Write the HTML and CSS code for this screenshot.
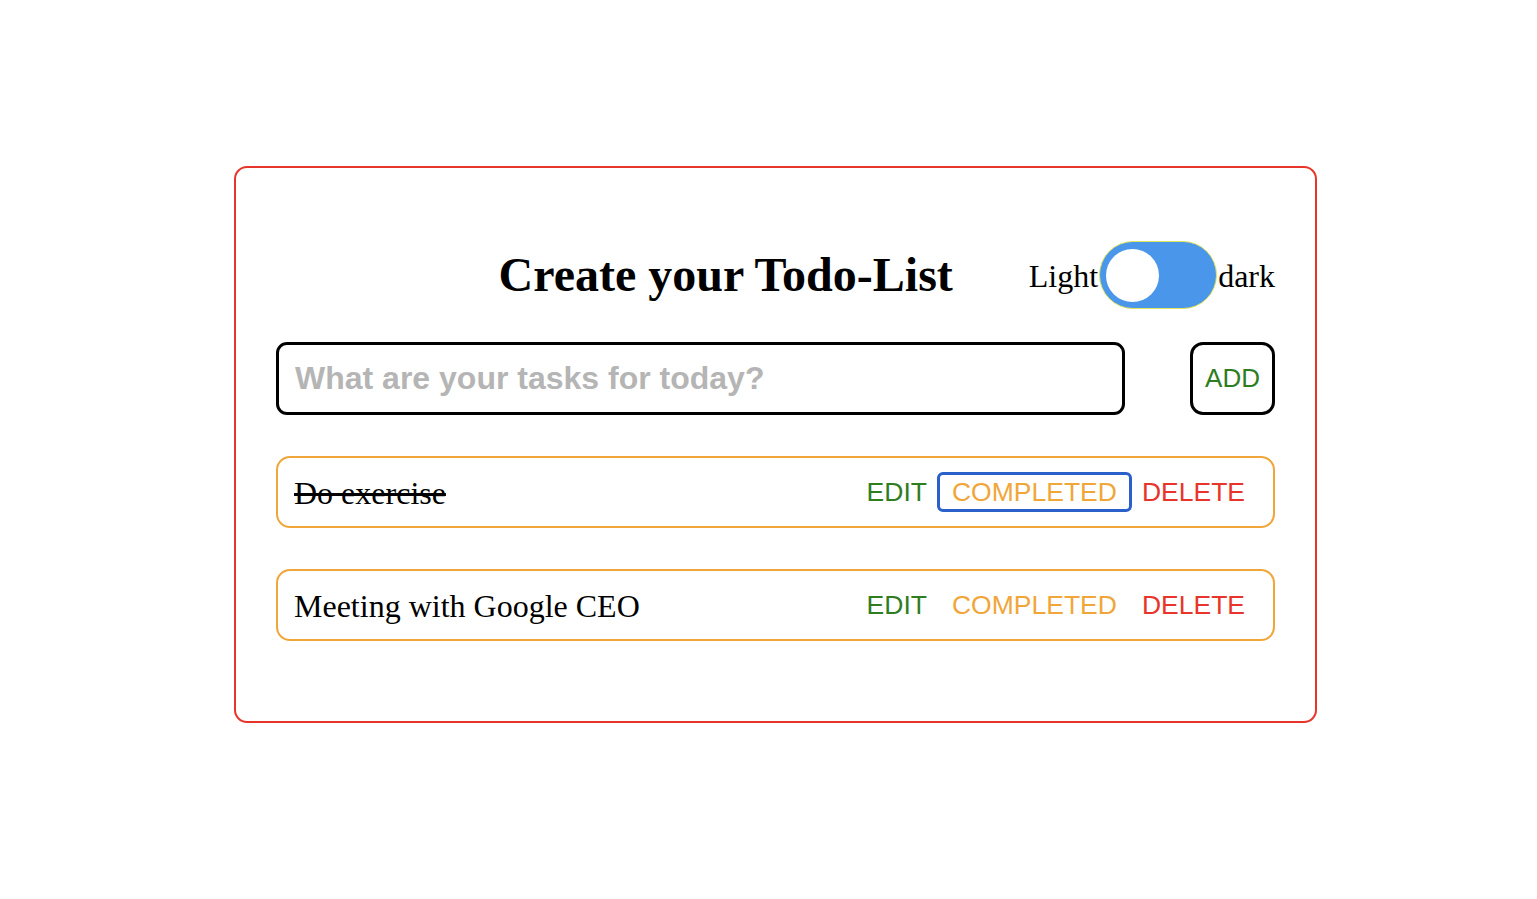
FILE: index.html
```html
<!DOCTYPE html>
<html lang="en">
<head>
<meta charset="utf-8">
<title>Todo-List</title>
<link rel="stylesheet" href="styles.css">
</head>
<body>
<main class="card">
  <header class="header">
    <h1 class="title">Create your Todo-List</h1>
    <div class="theme">
      <span class="theme-label">Light</span>
      <span class="switch"><span class="knob"></span></span>
      <span class="theme-label">dark</span>
    </div>
  </header>
  <form class="add-form">
    <input class="task-input" type="text" placeholder="What are your tasks for today?">
    <button class="add-btn" type="button">ADD</button>
  </form>
  <ul class="list">
    <li class="item">
      <span class="item-text done">Do exercise</span>
      <div class="actions">
        <button class="act edit" type="button">EDIT</button>
        <button class="act complete focused" type="button">COMPLETED</button>
        <button class="act delete" type="button">DELETE</button>
      </div>
    </li>
    <li class="item">
      <span class="item-text">Meeting with Google CEO</span>
      <div class="actions">
        <button class="act edit" type="button">EDIT</button>
        <button class="act complete" type="button">COMPLETED</button>
        <button class="act delete" type="button">DELETE</button>
      </div>
    </li>
  </ul>
</main>
</body>
</html>
```

FILE: styles.css
```css
* { box-sizing: border-box; }

body {
  margin: 0;
  background: #ffffff;
  font-family: "Liberation Serif", "Times New Roman", serif;
  color: #000;
}

.card {
  width: 1083px;
  margin: 166px 0 0 234px;
  border: 2px solid #e8352b;
  border-radius: 13px;
  padding: 73px 40px 80px 40px;
}

.header {
  display: flex;
  justify-content: flex-end;
  align-items: center;
  gap: 76px;
  height: 68px;
}

.title {
  margin: 0;
  font-size: 48px;
  font-weight: bold;
  line-height: 1;
}

.theme {
  display: flex;
  align-items: center;
}

.theme-label {
  font-size: 32px;
  line-height: 1;
  padding-top: 2px;
}

.switch {
  display: flex;
  align-items: center;
  width: 118px;
  height: 68px;
  margin: 0 1px;
  background: #4a96ea;
  border: 1px solid #e4e45a;
  border-radius: 34px;
  padding-left: 6px;
}

.knob {
  width: 53px;
  height: 53px;
  border-radius: 50%;
  background: #ffffff;
}

.add-form {
  display: flex;
  justify-content: space-between;
  margin: 33px 0 0 0;
}

.task-input {
  width: 849px;
  height: 73px;
  border: 3px solid #000;
  border-radius: 11px;
  padding: 0 16px;
  font-family: "Liberation Sans", Arial, sans-serif;
  font-size: 32px;
  font-weight: bold;
  outline: none;
}

.task-input::placeholder {
  color: #b5b5b5;
}

.add-btn {
  width: 85px;
  height: 73px;
  border: 3px solid #000;
  border-radius: 13px;
  background: #fff;
  color: #2e7d1f;
  font-family: "Liberation Sans", Arial, sans-serif;
  font-size: 26px;
  padding: 0;
}

.list {
  list-style: none;
  margin: 0;
  padding: 0;
}

.item {
  display: flex;
  align-items: center;
  justify-content: space-between;
  height: 72px;
  margin-top: 41px;
  border: 2px solid #f1a63a;
  border-radius: 14px;
  padding: 0 16px;
}

.item-text {
  font-size: 32px;
  line-height: 1;
  padding-top: 2px;
}

.item-text.done {
  text-decoration: line-through;
}

.actions {
  display: flex;
  align-items: center;
  gap: 1px;
}

.act {
  background: none;
  border: none;
  border-radius: 3px;
  padding: 2px 12px;
  line-height: 30px;
  font-family: "Liberation Sans", Arial, sans-serif;
  font-size: 26.5px;
  cursor: pointer;
}

.act.edit { color: #2e7d1f; }
.act.complete { color: #f1a63a; }
.act.delete { color: #e8352b; }

.act.focused {
  outline: 3px solid #2b5fc9;
  outline-offset: 0;
}
```
